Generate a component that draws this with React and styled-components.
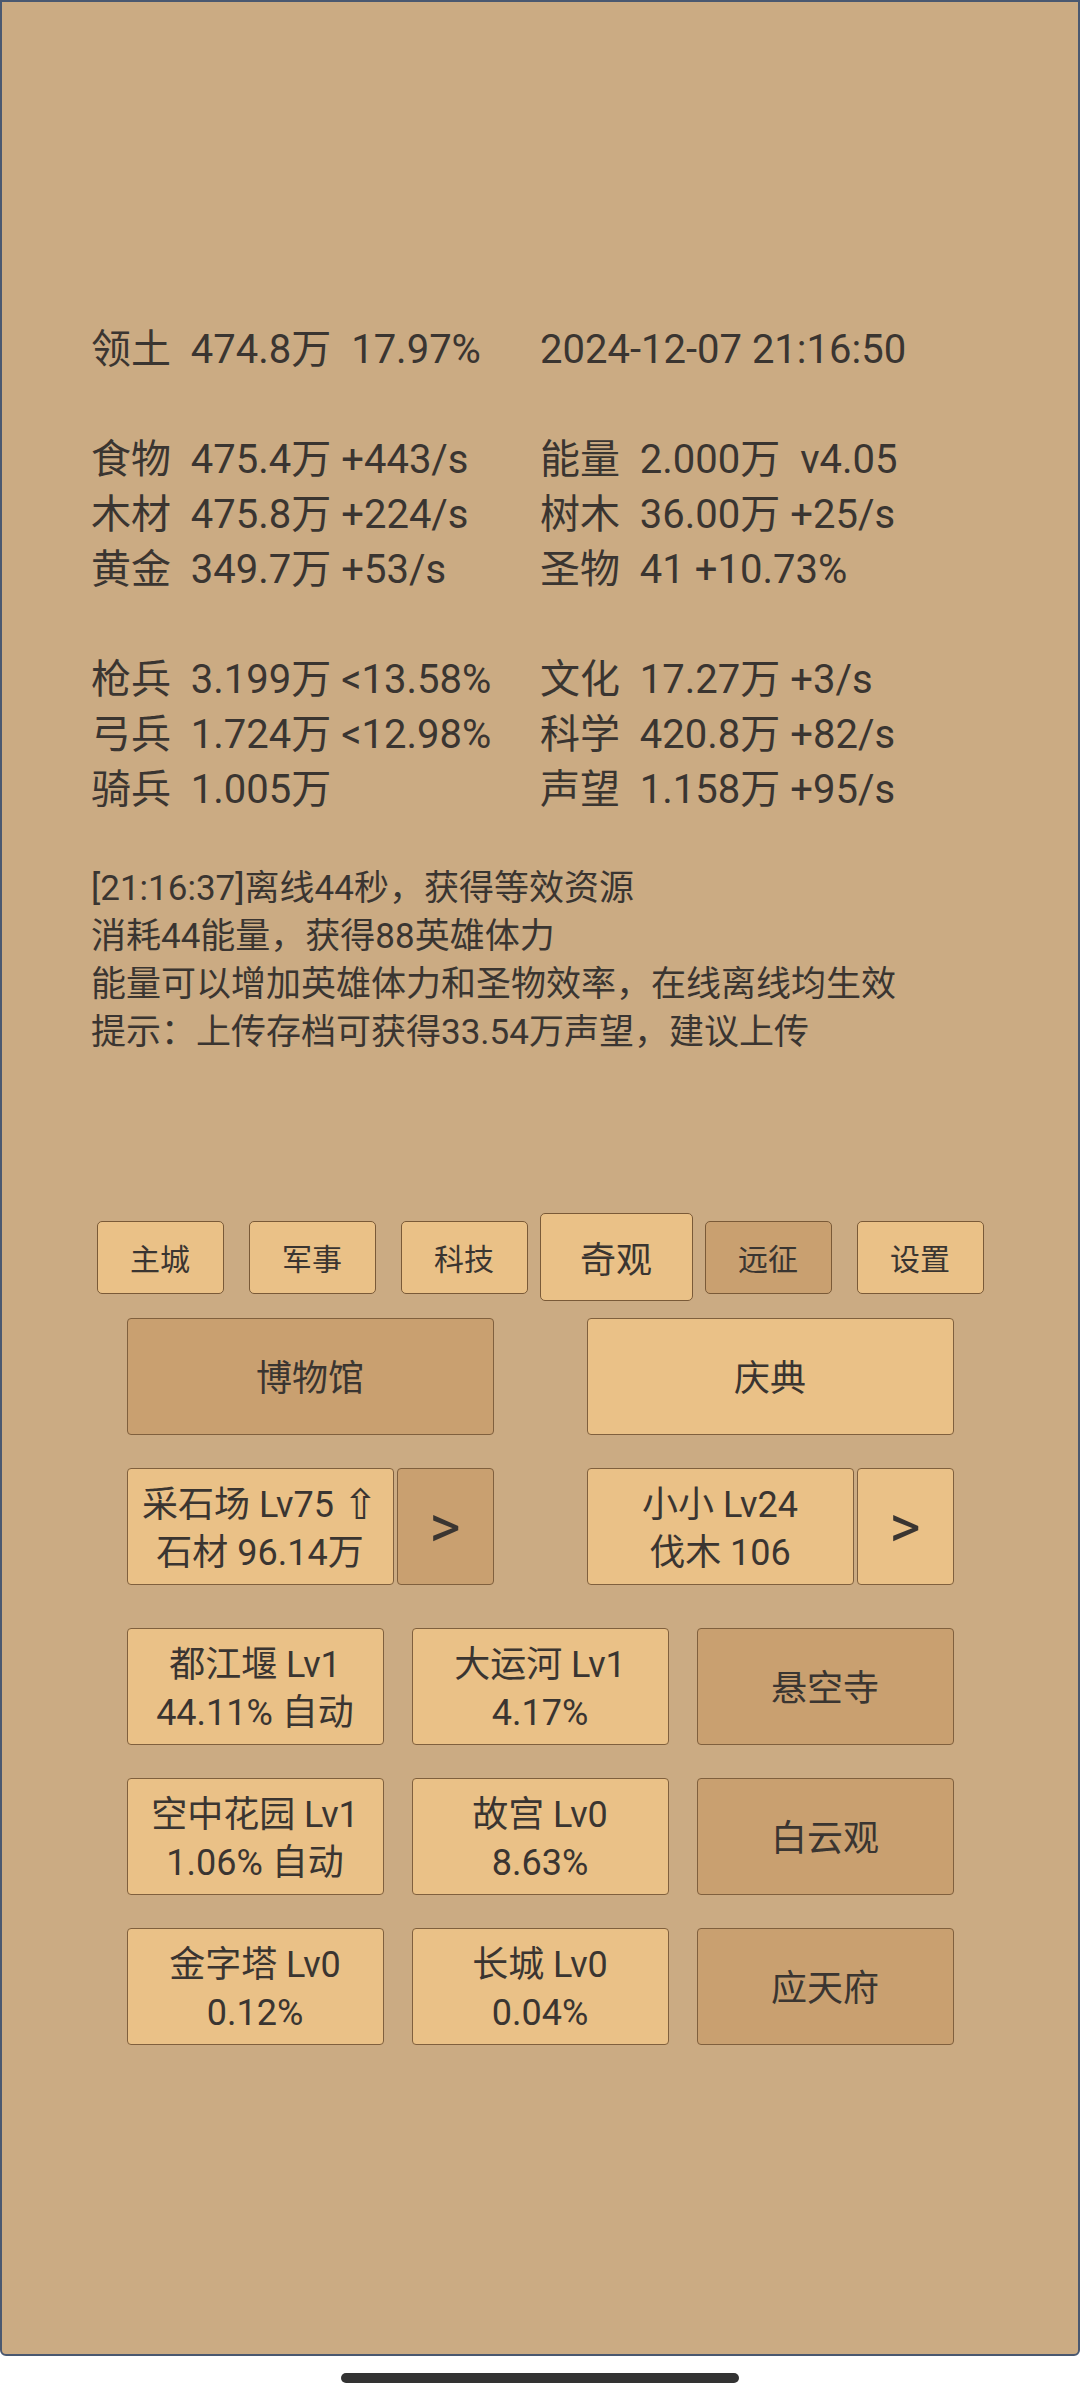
import React from 'react';
import styled, { createGlobalStyle } from 'styled-components';

const Global = createGlobalStyle`
  html, body { margin: 0; padding: 0; background: #ffffff; }
  body { font-family: Roboto, "Noto Sans CJK SC", sans-serif; }
`;

const Screen = styled.div`
  width: 1080px;
  height: 2400px;
  display: flex;
  flex-direction: column;
  background: #ffffff;
`;

const Panel = styled.main`
  box-sizing: border-box;
  height: 2356px;
  border: 2px solid #4a5870;
  border-radius: 0 0 6px 6px;
  background: #cbab83;
  color: #3a3531;
  padding-top: 320px;
  display: flex;
  flex-direction: column;
`;

const StatGrid = styled.section`
  display: grid;
  grid-template-columns: 449px 1fr;
  grid-auto-rows: 55px;
  padding-left: 89px;
  font-size: 40px;
  line-height: 55px;
  white-space: pre;
`;

const StatCell = styled.div`
  display: flex;
  align-items: center;
`;

const Blank = styled.div`
  grid-column: 1 / span 2;
`;

const Messages = styled.section`
  margin-top: 48px;
  padding-left: 89px;
  font-size: 35px;
  line-height: 48px;
`;

const MsgLine = styled.div``;

const TabBar = styled.nav`
  margin-top: 156px;
  height: 88px;
  display: grid;
  grid-template-columns: repeat(6, 152px);
  justify-content: center;
  align-items: center;
  justify-items: center;
`;

const Tab = styled.div`
  box-sizing: border-box;
  width: ${p => (p.$active ? '153px' : '127px')};
  height: ${p => (p.$active ? '88px' : '73px')};
  font-size: ${p => (p.$active ? '36px' : '30px')};
  background: ${p => (p.$dark ? '#c9a070' : '#eac187')};
  border: 1px solid #7a5a38;
  border-radius: 5px;
  display: flex;
  align-items: center;
  justify-content: center;
`;

const Board = styled.section`
  margin: 17px auto 0;
  width: 827px;
  display: flex;
  flex-direction: column;
`;

const HalfRow = styled.div`
  display: grid;
  grid-template-columns: 367px 367px;
  column-gap: 93px;
  height: 117px;
  margin-bottom: ${p => p.$gap}px;
`;

const Btn = styled.div`
  box-sizing: border-box;
  height: 117px;
  padding-top: 5px;
  background: ${p => (p.$dark ? '#c9a070' : '#eac187')};
  border: 1px solid #80603e;
  border-radius: 4px;
  display: flex;
  flex-direction: column;
  align-items: center;
  justify-content: center;
  font-size: 36px;
  line-height: 48px;
  text-align: center;
  white-space: pre;
`;

const Pair = styled.div`
  display: grid;
  grid-template-columns: 267px 97px;
  column-gap: 3px;
`;

const Arrow = styled(Btn)`
  padding-top: 0;
  font-size: 60px;
  line-height: 1;
`;

const Sym = styled.span`
  display: inline-block;
  font-family: "DejaVu Sans", sans-serif;
  font-size: 42px;
  line-height: 40px;
  vertical-align: -2px;
`;

const WonderGrid = styled.div`
  display: grid;
  grid-template-columns: repeat(3, 257px);
  grid-auto-rows: 117px;
  column-gap: 28px;
  row-gap: 33px;
`;

const HomeArea = styled.div`
  flex: 1;
  display: flex;
  align-items: center;
  justify-content: center;
`;

const HomeBar = styled.div`
  width: 398px;
  height: 10px;
  border-radius: 5px;
  background: #333333;
`;

const stats = [
  ['领土  474.8万  17.97%', '2024-12-07 21:16:50'],
  null,
  ['食物  475.4万 +443/s', '能量  2.000万  v4.05'],
  ['木材  475.8万 +224/s', '树木  36.00万 +25/s'],
  ['黄金  349.7万 +53/s', '圣物  41 +10.73%'],
  null,
  ['枪兵  3.199万 <13.58%', '文化  17.27万 +3/s'],
  ['弓兵  1.724万 <12.98%', '科学  420.8万 +82/s'],
  ['骑兵  1.005万', '声望  1.158万 +95/s'],
];

const messages = [
  '[21:16:37]离线44秒，获得等效资源',
  '消耗44能量，获得88英雄体力',
  '能量可以增加英雄体力和圣物效率，在线离线均生效',
  '提示：上传存档可获得33.54万声望，建议上传',
];

const tabs = [
  { label: '主城' },
  { label: '军事' },
  { label: '科技' },
  { label: '奇观', active: true },
  { label: '远征', dark: true },
  { label: '设置' },
];

const wonders = [
  { lines: ['都江堰 Lv1', '44.11% 自动'] },
  { lines: ['大运河 Lv1', '4.17%'] },
  { lines: ['悬空寺'], dark: true },
  { lines: ['空中花园 Lv1', '1.06% 自动'] },
  { lines: ['故宫 Lv0', '8.63%'] },
  { lines: ['白云观'], dark: true },
  { lines: ['金字塔 Lv0', '0.12%'] },
  { lines: ['长城 Lv0', '0.04%'] },
  { lines: ['应天府'], dark: true },
];

export default function App() {
  return (
    <Screen>
      <Global />
      <Panel>
        <StatGrid>
          {stats.map((row, i) =>
            row ? (
              <React.Fragment key={i}>
                <StatCell>{row[0]}</StatCell>
                <StatCell>{row[1]}</StatCell>
              </React.Fragment>
            ) : (
              <Blank key={i} />
            )
          )}
        </StatGrid>
        <Messages>
          {messages.map((m, i) => (
            <MsgLine key={i}>{m}</MsgLine>
          ))}
        </Messages>
        <TabBar>
          {tabs.map(t => (
            <Tab key={t.label} $active={t.active} $dark={t.dark}>
              {t.label}
            </Tab>
          ))}
        </TabBar>
        <Board>
          <HalfRow $gap={33}>
            <Btn $dark>博物馆</Btn>
            <Btn>庆典</Btn>
          </HalfRow>
          <HalfRow $gap={43}>
            <Pair>
              <Btn>
                <div>
                  采石场 Lv75 <Sym>⇧</Sym>
                </div>
                <div>石材 96.14万</div>
              </Btn>
              <Arrow $dark>&gt;</Arrow>
            </Pair>
            <Pair>
              <Btn>
                <div>小小 Lv24</div>
                <div>伐木 106</div>
              </Btn>
              <Arrow>&gt;</Arrow>
            </Pair>
          </HalfRow>
          <WonderGrid>
            {wonders.map((w, i) => (
              <Btn key={i} $dark={w.dark}>
                {w.lines.map((l, j) => (
                  <div key={j}>{l}</div>
                ))}
              </Btn>
            ))}
          </WonderGrid>
        </Board>
      </Panel>
      <HomeArea>
        <HomeBar />
      </HomeArea>
    </Screen>
  );
}
